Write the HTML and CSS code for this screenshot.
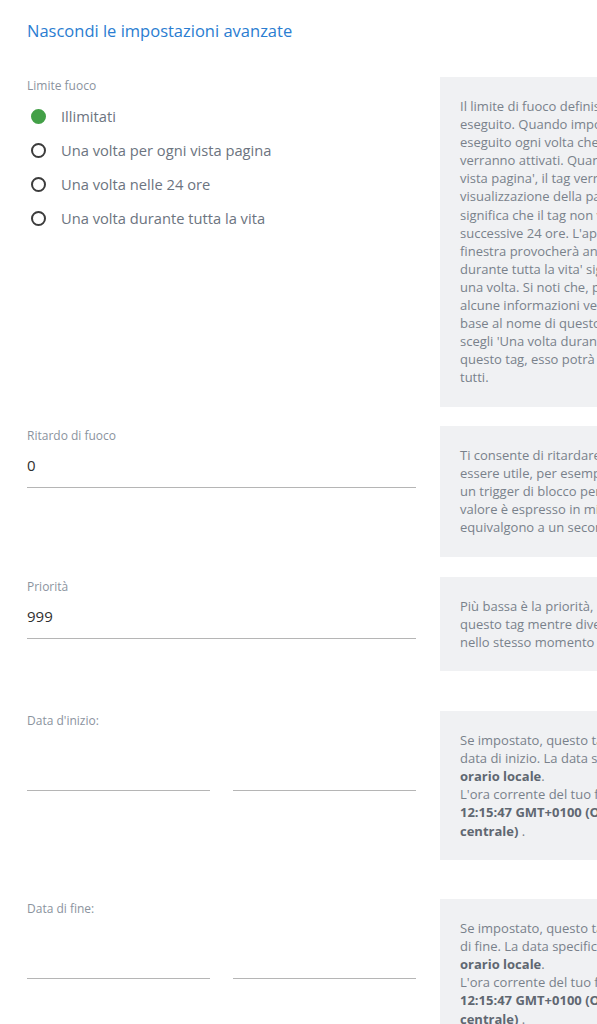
FILE: index.html
```html
<!DOCTYPE html>
<html lang="it">
<head>
<meta charset="utf-8">
<title>Impostazioni avanzate</title>
<link rel="stylesheet" href="styles.css">
</head>
<body>
<div class="page">
  <a class="toggle" href="#">Nascondi le impostazioni avanzate</a>

  <div class="row row-first">
    <div class="left">
      <div class="label label-radio">Limite fuoco</div>
      <ul class="radios">
        <li class="radio checked"><span class="dot"></span><span>Illimitati</span></li>
        <li class="radio"><span class="dot"></span><span>Una volta per ogni vista pagina</span></li>
        <li class="radio"><span class="dot"></span><span>Una volta nelle 24 ore</span></li>
        <li class="radio"><span class="dot"></span><span>Una volta durante tutta la vita</span></li>
      </ul>
    </div>
    <div class="help help-long">Il limite di fuoco definisce quante volte un tag può essere<br>eseguito. Quando impostato su 'Illimitati', il tag verrà<br>eseguito ogni volta che le condizioni dei trigger<br>verranno attivati. Quando impostato su 'Una volta per ogni<br>vista pagina', il tag verrà eseguito una volta per ogni<br>visualizzazione della pagina. 'Una volta nelle 24 ore'<br>significa che il tag non verrà eseguito di nuovo per le<br>successive 24 ore. L'apertura di una nuova scheda o<br>finestra provocherà ancora l'esecuzione. 'Una volta<br>durante tutta la vita' significa che il tag verrà eseguito<br>una volta. Si noti che, per poter funzionare,<br>alcune informazioni verranno salvate in un cookie in<br>base al nome di questo tag. Se rinomini il tag e<br>scegli 'Una volta durante tutta la vita' per<br>questo tag, esso potrà essere eseguito di nuovo per<br>tutti.</div>
  </div>

  <div class="row">
    <div class="left field">
      <div class="label">Ritardo di fuoco</div>
      <div class="input">0</div>
    </div>
    <div class="help">Ti consente di ritardare l'esecuzione del tag. Può<br>essere utile, per esempio, quando si utilizza<br>un trigger di blocco per attendere un evento. Il<br>valore è espresso in millisecondi: 1000 millisecondi<br>equivalgono a un secondo.</div>
  </div>

  <div class="row">
    <div class="left field">
      <div class="label">Priorità</div>
      <div class="input">999</div>
    </div>
    <div class="help">Più bassa è la priorità, prima verrà eseguito<br>questo tag mentre diversi tag vengono eseguiti<br>nello stesso momento in cui si attiva il trigger.</div>
  </div>

  <div class="row">
    <div class="left date-field">
      <div class="label">Data d'inizio:</div>
      <div class="dates">
        <div class="input date"></div>
        <div class="input date"></div>
      </div>
    </div>
    <div class="help">Se impostato, questo tag non verrà eseguito prima della<br>data di inizio. La data specificata si basa sul tuo<br><b>orario locale</b>.<br>L'ora corrente del tuo fuso orario è: Mon Jan 01 2024<br><b>12:15:47 GMT+0100 (Ora standard dell'Europa</b><br><b>centrale)</b> .</div>
  </div>

  <div class="row">
    <div class="left date-field">
      <div class="label">Data di fine:</div>
      <div class="dates">
        <div class="input date"></div>
        <div class="input date"></div>
      </div>
    </div>
    <div class="help">Se impostato, questo tag non verrà eseguito dopo la data<br>di fine. La data specificata si basa sul tuo<br><b>orario locale</b>.<br>L'ora corrente del tuo fuso orario è: Mon Jan 01 2024<br><b>12:15:47 GMT+0100 (Ora standard dell'Europa</b><br><b>centrale)</b> .</div>
  </div>
</div>
</body>
</html>
```

FILE: styles.css
```css
html, body {
  margin: 0;
  padding: 0;
  background: #ffffff;
  overflow: hidden;
}

body {
  font-family: "Open Sans", "Noto Sans", "Liberation Sans", sans-serif;
  color: #6f7782;
}

.page {
  width: 800px;
  padding: 20px 0 0 27px;
}

.toggle {
  display: block;
  font-size: 16.5px;
  line-height: 22px;
  color: #2a7dd1;
  text-decoration: none;
  margin-bottom: 35px;
}

.row {
  display: flex;
  align-items: flex-start;
  gap: 24px;
  margin-bottom: 20px;
}

.row-first {
  margin-bottom: 19px;
}

.left {
  width: 389px;
  flex: none;
}

.field {
  min-height: 114px;
}

.date-field {
  min-height: 168px;
}

.label {
  font-size: 12px;
  line-height: 20px;
  color: #8b939e;
}

.label-radio {
  line-height: 18px;
}

.radios {
  list-style: none;
  margin: 4px 0 0;
  padding: 0;
}

.radio {
  display: flex;
  align-items: center;
  height: 34px;
  font-size: 14.7px;
  color: #6c7480;
}

.dot {
  width: 15px;
  height: 15px;
  box-sizing: border-box;
  border: 2px solid #3c3c3c;
  border-radius: 50%;
  margin: 0 15px 0 4px;
  flex: none;
}

.checked .dot {
  background: #43a047;
  border-color: #43a047;
}

.input {
  height: 41px;
  line-height: 39px;
  font-size: 15px;
  color: #2f2f2f;
  border-bottom: 1px solid #b5b5b5;
}

.dates {
  display: flex;
  gap: 23px;
}

.date {
  flex: 1;
  height: 59px;
}

.help {
  width: 300px;
  flex: none;
  background: #f0f1f3;
  padding: 20px;
  font-size: 13px;
  line-height: 18.2px;
  color: #79818b;
  white-space: nowrap;
}

.help-long {
  line-height: 18.1px;
}

.help b {
  color: #5f6771;
  font-weight: 700;
}
```
